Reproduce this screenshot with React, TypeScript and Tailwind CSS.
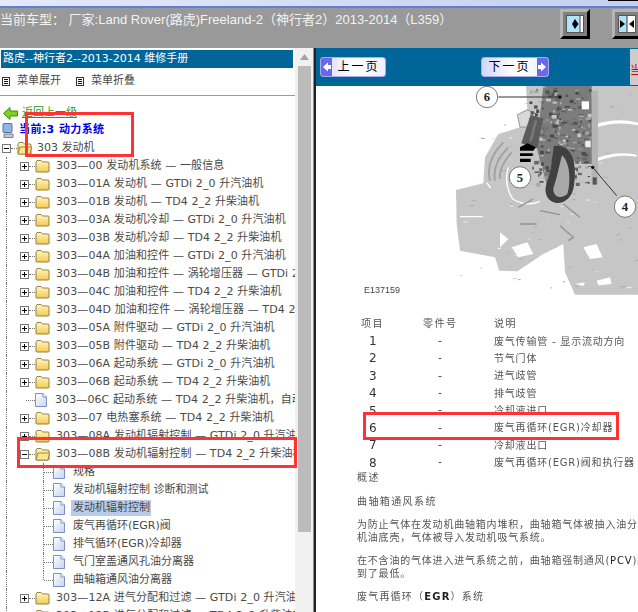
import React from 'react';

const sans = 'font-["DejaVu_Sans","Noto_Sans_CJK_SC",sans-serif]';

const groups = [
  '303—00 发动机系统 — 一般信息',
  '303—01A 发动机 — GTDi 2_0 升汽油机',
  '303—01B 发动机 — TD4 2_2 升柴油机',
  '303—03A 发动机冷却 — GTDi 2_0 升汽油机',
  '303—03B 发动机冷却 — TD4 2_2 升柴油机',
  '303—04A 加油和控件 — GTDi 2_0 升汽油机',
  '303—04B 加油和控件 — 涡轮增压器 — GTDi 2_0 升汽油机',
  '303—04C 加油和控件 — TD4 2_2 升柴油机',
  '303—04D 加油和控件 — 涡轮增压器 — TD4 2_2 升柴油机',
  '303—05A 附件驱动 — GTDi 2_0 升汽油机',
  '303—05B 附件驱动 — TD4 2_2 升柴油机',
  '303—06A 起动系统 — GTDi 2_0 升汽油机',
  '303—06B 起动系统 — TD4 2_2 升柴油机',
];

const children = [
  '规格',
  '发动机辐射控制 诊断和测试',
  '发动机辐射控制',
  '废气再循环(EGR)阀',
  '排气循环(EGR)冷却器',
  '气门室盖通风孔油分离器',
  '曲轴箱通风油分离器',
];

const parts = [
  ['1', '废气传输管 - 显示流动方向'],
  ['2', '节气门体'],
  ['3', '进气歧管'],
  ['4', '排气歧管'],
  ['5', '冷却液进口'],
  ['6', '废气再循环(EGR)冷却器'],
  ['7', '冷却液出口'],
  ['8', '废气再循环(EGR)阀和执行器'],
];

const Folder = ({ open }: { open?: boolean }) => (
  <svg width="15" height="14" viewBox="0 0 15 14" className="shrink-0">
    <defs>
      <linearGradient id="fold" x1="0" y1="0" x2="0" y2="1">
        <stop offset="0" stopColor="#fff6c4" />
        <stop offset="1" stopColor="#f5c94e" />
      </linearGradient>
    </defs>
    <path d="M1 3 L2 1.500 H6 L7.500 3 H13.500 L14 4 V12.500 L13.500 13 H1.500 L1 12.500 Z" fill="url(#fold)" stroke="#8a7430" strokeWidth="0.9" />
    {open && <path d="M1 13 L3 6 H14.500 L13 13 Z" fill="#fde58a" stroke="#8a7430" strokeWidth="0.8" />}
  </svg>
);

const Doc = () => (
  <svg width="12" height="14" viewBox="0 0 12 14" className="shrink-0">
    <defs>
      <linearGradient id="doc" x1="0" y1="0" x2="1" y2="1">
        <stop offset="0" stopColor="#ffffff" />
        <stop offset="1" stopColor="#c4d4f4" />
      </linearGradient>
    </defs>
    <path d="M0.500 0.500 H8 L11.500 4 V13.500 H0.500 Z" fill="url(#doc)" stroke="#7f8fc0" />
    <path d="M8 0.500 V4 H11.500" fill="#fff" stroke="#7f8fc0" />
  </svg>
);

const Box = ({ open }: { open?: boolean }) => (
  <svg width="9" height="9" viewBox="0 0 9 9" className="shrink-0">
    <rect x="0.500" y="0.500" width="8" height="8" fill="#fff" stroke="#777" />
    <path d={open ? 'M2 4.500 H7' : 'M2 4.500 H7 M4.500 2 V7'} stroke="#000" />
  </svg>
);

const Guide = ({ className }: { className: string }) => (
  <span className={`self-stretch w-px border-l border-dotted border-[#777] shrink-0 ${className}`} />
);

const Dash = ({ className }: { className: string }) => (
  <span className={`h-px border-t border-dotted border-[#777] shrink-0 ${className}`} />
);

const GroupRow = ({ label, open }: { label: string; open?: boolean }) => (
  <div className="flex items-center h-[18px] whitespace-nowrap">
    <Guide className="ml-[6px]" />
    <span className="w-[13px] shrink-0" />
    <Box open={open} />
    <Dash className="w-[6px]" />
    <Folder open={open} />
    <span className="ml-[6px] tracking-[0.1px]">{label}</span>
  </div>
);

const ChildRow = ({ label, active, last }: { label: string; active?: boolean; last?: boolean }) => (
  <div className="flex items-center h-[18px] whitespace-nowrap">
    <Guide className="ml-[6px]" />
    <span className="w-[36px] shrink-0" />
    <span className={`w-px border-l border-dotted border-[#777] shrink-0 ${last ? 'self-start h-[9px]' : 'self-stretch'}`} />
    <Dash className="w-[9px]" />
    <Doc />
    <span className={`pl-[2px] pr-[1px] ml-[6px] ${active ? 'bg-[#b8cce8]' : ''}`}>{label}</span>
  </div>
);

const MenuIcon = () => (
  <svg width="8" height="9" viewBox="0 0 8 9" className="shrink-0">
    <rect x="0.500" y="0.500" width="7" height="8" fill="#fff" stroke="#333" />
    <path d="M2 2.500 H6 M2 4.500 H6 M2 6.500 H6" stroke="#111" />
  </svg>
);

const ToggleButton = ({ double }: { double?: boolean }) => (
  <div className="w-[30px] h-[30px] shrink-0 border-[3px] border-t-[#b5b5b5] border-l-[#b5b5b5] border-r-black border-b-black bg-[#808080] p-[3px]">
    <svg width="18" height="18" viewBox="0 0 18 18" className="block">
      <rect x="0.500" y="0.500" width="17" height="17" fill="#ade4fb" stroke="#555" />
      <rect x="14" y="1" width="3" height="16" fill="#fff" />
      {double ? (
        <>
          <rect x="9" y="1" width="8" height="16" fill="#fff" />
          <path d="M9 1 V17" stroke="#333" />
          <path d="M2 5 L7 9 L2 13 Z M16 5 L11 9 L16 13 Z" fill="#000" />
        </>
      ) : (
        <>
          <path d="M14 1 V17" stroke="#444" />
          <path d="M9 4 L12.500 9 L9 14 L6 9 Z" fill="#000" />
        </>
      )}
    </svg>
  </div>
);

const PageButton = ({ label, side, className }: { label: string; side: 'left' | 'right'; className: string }) => (
  <div className={`flex items-center h-[20px] rounded-[3px] border border-[#a9a9ee] bg-gradient-to-r from-[#d5d5fb] via-white to-[#eeeeff] overflow-hidden text-black text-[12px] ${className}`}>
    {side === 'left' && (
      <svg width="11" height="18" viewBox="0 0 11 18" className="shrink-0 bg-[#6a6ae6]">
        <path d="M2 9 L7 4.500 V7 H10 V11 H7 V13.500 Z" fill="#fff" />
      </svg>
    )}
    <span className="flex-1 text-center tracking-[2px]">{label}</span>
    {side === 'right' && (
      <svg width="11" height="18" viewBox="0 0 11 18" className="shrink-0 bg-[#6a6ae6]">
        <path d="M9 9 L4 4.500 V7 H1 V11 H4 V13.500 Z" fill="#fff" />
      </svg>
    )}
  </div>
);

// scratchy shading of the scanned drawing
const rnd = (n: number) => {
  const v = Math.sin(n * 12.9898) * 43758.5453;
  return v - Math.floor(v);
};

const specks = Array.from({ length: 240 }, (_, i) => ({
  x: 268 + rnd(i) * 180,
  y: 8 + rnd(i + 500) * 290,
  w: 3 + rnd(i + 900) * 13,
  h: 2 + rnd(i + 1300) * 9,
  c: ['#555555', '#a4a4a4', '#666666', '#c4c4c4', '#4a4a4a'][i % 5],
}));

const lightSpecks = Array.from({ length: 90 }, (_, i) => ({
  x: 60 + rnd(i + 2000) * 530,
  y: 30 + rnd(i + 2500) * 590,
  w: 3 + rnd(i + 3000) * 12,
  h: 1 + rnd(i + 3500) * 3,
  c: i % 3 === 0 ? '#ececec' : '#acacac',
}));

const EngineDrawing = () => (
  <svg width="198" height="223" viewBox="0 6 594 669" className="block">
    <path
      d="M48 318 L130 298 L135 220 L175 150 L240 130 L232 92 L262 75 L258 6 L594 6 L594 632 L405 632 L375 565 L370 480 L310 510 L232 562 L178 560 L165 520 L60 500 L50 420 Z"
      fill="#c6c6c6"
    />
    {lightSpecks.map((s, i) => (
      <rect key={i} x={s.x} y={s.y} width={s.w} height={s.h} fill={s.c} />
    ))}
    <path d="M150 290 Q135 230 190 175 M165 290 Q155 240 205 190 M180 285 Q175 250 215 205" fill="none" stroke="#a2a2a2" strokeWidth="6" />
    <path d="M205 250 Q190 300 218 345 Q260 370 300 352 M60 398 H128 M140 296 L152 312" fill="none" stroke="#fff" strokeWidth="4" />
    <path d="M470 120 Q530 100 594 116 L594 124 Q530 110 470 130 Z M470 222 Q530 200 590 212 L590 218 Q530 208 470 232 Z" fill="#fff" />
    <path d="M215 490 L262 475 L280 510 L235 520 Z M430 490 L470 480 L488 520 L450 525 Z M470 590 L510 580 L515 600 L475 604 Z M405 600 L435 595 L430 606 Z M180 445 L205 465 L180 490 Z" fill="#fff" />
    <path d="M240 420 H290 M235 370 L280 345 M360 425 L400 460 L385 470 M370 360 L420 400 M300 380 L360 392" fill="none" stroke="#929292" strokeWidth="4" />
    <path d="M232 92 L262 78 L296 92 L270 128 L240 130 Z" fill="#d8d8d8" stroke="#9a9a9a" strokeWidth="3" />
    <path d="M262 6 L455 6 L458 240 L400 240 L400 300 L320 300 L300 230 L290 190 L300 90 L310 6 Z" fill="#7c7c7c" />
    {specks.map((s, i) => (
      <rect key={i} x={s.x} y={s.y} width={s.w} height={s.h} fill={s.c} />
    ))}
    <path d="M272 92 L310 104 L292 192 L244 178 Z" fill="#5c5c5c" />
    <path d="M284 108 L292 110 L276 172 L268 170 Z" fill="#777" />
    <rect x="425" y="52" width="22" height="24" fill="#fff" />
    <rect x="436" y="170" width="16" height="20" fill="#eee" />
    <path d="M455 20 H474 V300 H455 Z" fill="#b4b4b4" />
    <path d="M458 280 H470 V302 H458 Z" fill="#555" />
    <path d="M342 186 C398 178 412 240 402 305 C394 362 338 372 320 335 C308 300 335 280 335 230 Z" fill="#404040" />
    <path d="M366 214 C392 236 392 300 382 330 C362 348 338 338 340 312 C352 280 356 250 366 214 Z" fill="#a8a8a8" />
    <path d="M240 190 L262 178 L288 190 L280 200 L240 200 Z M240 208 H278 V216 H240 Z M240 224 H272 V234 H240 Z" fill="#000" />
    <path d="M175 39 H360" stroke="#333" strokeWidth="3" />
    <circle cx="360" cy="39" r="5" fill="#111" />
    <path d="M458 250 L530 335" stroke="#333" strokeWidth="3" />
    <circle cx="458" cy="250" r="5" fill="#111" />
    {[
      { n: '6', x: 141, y: 39 },
      { n: '5', x: 240, y: 280 },
      { n: '4', x: 555, y: 368 },
    ].map((c) => (
      <g key={c.n}>
        <circle cx={c.x} cy={c.y} r="32" fill="#fff" stroke="#777" strokeWidth="3" />
        <text x={c.x} y={c.y + 13} textAnchor="middle" fontSize="38" fontWeight="700" fontFamily="Liberation Serif, serif" fill="#222">
          {c.n}
        </text>
      </g>
    ))}
  </svg>
);

const App: React.FC = () => {
  return (
    <div className={`relative w-[638px] h-[612px] overflow-hidden bg-white ${sans}`}>
      {/* window strip */}
      <div className="h-[6px] bg-gradient-to-r from-[#e6e9fb] to-[#c3d0f0] flex justify-end">
        <div className="w-[30px] h-px bg-black" />
      </div>
      <div className="h-[2px] bg-[#5f80d8]" />

      {/* car model bar */}
      <div className="h-[40px] bg-[#999999] flex items-start overflow-hidden">
        <div className="w-[560px] shrink-0 pt-[2px] text-[#f2f2f2] text-[13px] leading-[20px] whitespace-nowrap font-['Liberation_Sans','Noto_Sans_CJK_SC',sans-serif]">
          当前车型： 厂家:Land Rover(路虎)Freeland-2（神行者2）2013-2014（L359）
        </div>
        <div className="flex gap-[22px] pt-px">
          <ToggleButton />
          <ToggleButton double />
        </div>
      </div>

      <div className="flex h-[564px]">
        {/* left tree panel */}
        <div className="w-[295px] shrink-0 overflow-hidden text-[11px] text-[#4a4a4a]">
          <div className="mt-[2px] ml-px w-[292px] h-[18px] bg-[#006699] text-white pl-[2px] text-[11px] leading-[18px] whitespace-nowrap">
            路虎--神行者2--2013-2014 维修手册
          </div>
          <div className="h-[28px] flex items-center pl-[2px] border-b border-[#999] pb-px">
            <MenuIcon />
            <span className="ml-[7px] text-[11px]">菜单展开</span>
            <span className="w-[15px]" />
            <MenuIcon />
            <span className="ml-[7px] text-[11px]">菜单折叠</span>
          </div>
          <div className="h-[17px] mt-[9px] flex items-center pl-[3px]">
            <svg width="15" height="13" viewBox="0 0 15 13" className="shrink-0">
              <path d="M0.500 6.500 L7 0.500 V4 H14.500 V9 H7 V12.500 Z" fill="#7ed321" stroke="#3e8a10" />
            </svg>
            <span className="ml-[4px] text-[#2a9a10] underline">返回上一级</span>
          </div>
          <div className="h-[17px] flex items-center pl-[2px] whitespace-nowrap">
            <svg width="12" height="15" viewBox="0 0 12 15" className="shrink-0">
              <rect x="1" y="0.500" width="9" height="9" rx="1" fill="#8fb4e8" stroke="#5a6f9a" />
              <path d="M2 11 H11 V14.500 H2 Z" fill="#c6c9d6" stroke="#7a7f92" />
            </svg>
            <span className="ml-[5px] text-[#0000ee] font-bold text-[11px] tracking-[0.4px]">当前:3 动力系统</span>
          </div>
          <div className="h-[18px] flex items-center pl-[2px] whitespace-nowrap">
            <Box open />
            <Dash className="w-[6px]" />
            <Folder open />
            <span className="ml-[5px]">303 发动机</span>
          </div>
          {groups.map((g) => (
            <GroupRow key={g} label={g} />
          ))}
          <div className="flex items-center h-[18px] whitespace-nowrap">
            <Guide className="ml-[6px]" />
            <span className="w-[19px] shrink-0" />
            <Dash className="w-[9px]" />
            <Doc />
            <span className="ml-[8px] tracking-[0.1px]">303—06C 起动系统 — TD4 2_2 升柴油机，自动变速器</span>
          </div>
          <GroupRow label="303—07 电热塞系统 — TD4 2_2 升柴油机" />
          <GroupRow label="303—08A 发动机辐射控制 — GTDi 2_0 升汽油机" />
          <GroupRow label="303—08B 发动机辐射控制 — TD4 2_2 升柴油机" open />
          {children.map((c, i) => (
            <ChildRow key={c} label={c} active={i === 2} last={i === children.length - 1} />
          ))}
          <GroupRow label="303—12A 进气分配和过滤 — GTDi 2_0 升汽油机" />
          <GroupRow label="303—12B 进气分配和过滤 — TD4 2_2 升柴油机" />
        </div>

        {/* tree scrollbar */}
        <div className="w-[18px] shrink-0 bg-[#f1f1f1] flex flex-col items-center px-[2px] pt-[6px]">
          <svg width="9" height="6" viewBox="0 0 9 6" className="shrink-0">
            <path d="M4.500 0 L9 6 H0 Z" fill="#a3a3a3" />
          </svg>
          <div className="mt-[6px] w-[13px] h-[466px] bg-[#bbbbbb]" />
        </div>
        <div className="w-px bg-[#8a8a8a]" />
        <div className="w-[2px] bg-[#222]" />

        {/* right manual page */}
        <div className="flex-1 min-w-0 overflow-hidden">
          <div className="h-[38px] bg-[#006699] flex items-center pl-[4px] relative">
            <PageButton label="上一页" side="left" className="w-[66px]" />
            <PageButton label="下一页" side="right" className="w-[68px] ml-[95px] mb-px" />
            <div className="ml-auto w-[8px] h-[36px] bg-[#cccccc] text-[#e00000] text-[12px] overflow-hidden pt-[13px] whitespace-nowrap">当前</div>
          </div>
          <div className="flex justify-end">
            <EngineDrawing />
          </div>
          <div className="blur-[0.3px] text-[10px] text-[#555]">
            <div className="ml-[48px] -mt-[26px] h-[14px] font-['Liberation_Sans',sans-serif] text-[9px] leading-[14px] text-[#444]">E137159</div>
            <div className="mt-[18px] grid grid-cols-[62px_71px_1fr] ml-[45px] h-[17px] items-center tracking-[1.5px]">
              <span>项目</span>
              <span>零件号</span>
              <span>说明</span>
            </div>
            {parts.map(([n, d]) => (
              <div key={n} className="grid grid-cols-[62px_71px_1fr] ml-[45px] h-[17.400px] items-center tracking-[0.8px] whitespace-nowrap">
                <span className="pl-[8px] text-[12px] text-[#333]">{n}</span>
                <span className="pl-[15px] text-[11px] text-[#333]">-</span>
                <span>{d}</span>
              </div>
            ))}
            <div className="ml-[41px] tracking-[1.5px] whitespace-nowrap leading-[14px]">概述</div>
            <div className="ml-[41px] mt-[10px] tracking-[1.4px] whitespace-nowrap leading-[14px]">曲轴箱通风系统</div>
            <div className="ml-[41px] mt-[9px] tracking-[0.8px] whitespace-nowrap leading-[13px]">
              <p>为防止气体在发动机曲轴箱内堆积，曲轴箱气体被抽入油分离器，</p>
              <p>机油底壳，气体被导入发动机吸气系统。</p>
              <p className="mt-[10px]">在不含油的气体进入进气系统之前，曲轴箱强制通风(<span className="text-[#222]">PCV</span>)阀</p>
              <p>到了最低。</p>
              <p className="mt-[10px] tracking-[1.2px]">废气再循环（<b className="text-[#222]">EGR</b>）系统</p>
            </div>
          </div>
        </div>
      </div>

      {/* red annotation boxes */}
      <div className="absolute left-[25px] top-[112px] w-[109px] h-[45px] border-[3px] border-[#ff3333]" />
      <div className="absolute left-[17px] top-[437px] w-[280px] h-[31px] border-[3px] border-[#ff3333]" />
      <div className="absolute left-[363px] top-[412px] w-[256px] h-[28px] border-[3px] border-[#ff3333]" />
    </div>
  );
};

export default App;
